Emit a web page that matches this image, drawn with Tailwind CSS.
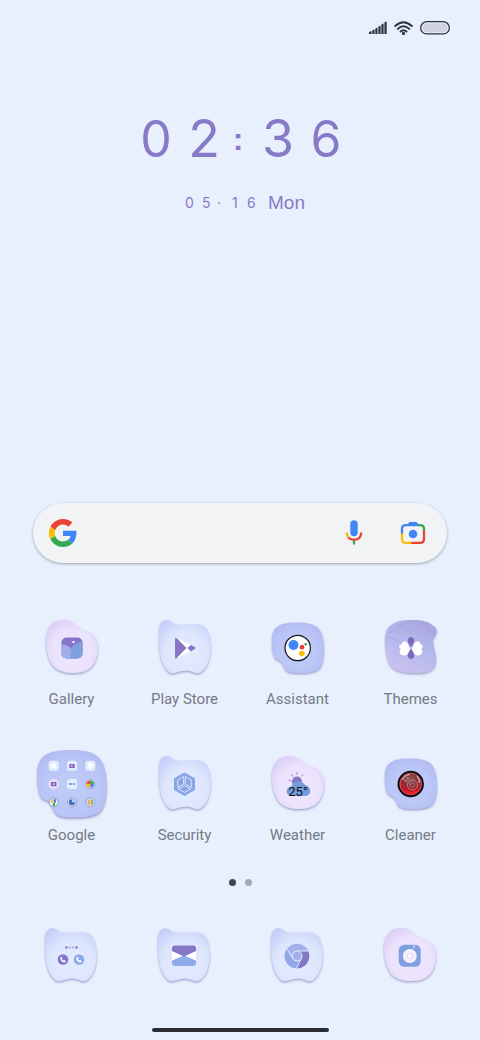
<!DOCTYPE html>
<html lang="en">
<head>
<meta charset="utf-8">
<meta name="viewport" content="width=device-width, initial-scale=1">
<title>Home screen</title>
<script src="https://cdn.jsdelivr.net/npm/@tailwindcss/browser@4"></script>
</head>
<body class="flex min-h-screen flex-col bg-[#e8f0fe] font-[Roboto,sans-serif] text-[#757a84]">

<!-- Shared shapes and fills -->
<svg class="absolute size-0" aria-hidden="true">
  <defs>
    <radialGradient id="pink" cx=".52" cy=".58" r=".66"><stop offset="0" stop-color="#efe8fd"/><stop offset=".6" stop-color="#ebe2fc"/><stop offset="1" stop-color="#d9cdf7"/></radialGradient>
    <radialGradient id="ice" cx=".52" cy=".64" r=".76"><stop offset="0" stop-color="#e3ecfe"/><stop offset=".55" stop-color="#dde6fd"/><stop offset="1" stop-color="#c0cbf8"/></radialGradient>
    <radialGradient id="blue" cx=".5" cy=".55" r=".65"><stop offset="0" stop-color="#bfccf8"/><stop offset=".6" stop-color="#bbc6f7"/><stop offset="1" stop-color="#b0b9f0"/></radialGradient>
    <linearGradient id="violet" x1=".8" y1="0" x2=".3" y2="1"><stop offset="0" stop-color="#a9a3dc"/><stop offset=".5" stop-color="#b4b9ee"/><stop offset="1" stop-color="#cbc2ee"/></linearGradient>
    <radialGradient id="ruby" cx=".5" cy=".3" r=".75"><stop offset="0" stop-color="#86595c"/><stop offset=".45" stop-color="#8e2c33"/><stop offset=".8" stop-color="#d01222"/><stop offset="1" stop-color="#7c0c16"/></radialGradient>
    <filter id="drop" x="-20%" y="-20%" width="140%" height="140%"><feDropShadow dx="0" dy="1.3" stdDeviation=".8" flood-color="#7d83b5" flood-opacity=".75"/></filter>
    <path id="pebble" fill="url(#pink)" filter="url(#drop)" d="M22 2C29 2 33 7 39 11C44 13 49 14 52 18C56 22 56 28 56 32C55 40 53 47 47 51C42 54 37 55 31 55C23 55 17 53 12 49C7 43 4 33 4 24C4 17 5 11 9 7C12 3 17 2 22 2Z"/>
    <path id="cat" fill="url(#ice)" filter="url(#drop)" d="M11 2.300C15 2 17 5.500 21 6.500C28 7 35 6 42 6.300C48 6.500 53 10 54 17C56 24 56 31 55 37C54 44 50 53 44 55C40 56 37 52.500 31 52.500C25 52.500 20 56 16 55C11 53 8 46 6 40C4 31 4 22 4 14C4 8 6 2.500 11 2.300Z"/>
    <g id="bite"><path fill="url(#blue)" filter="url(#drop)" d="M30 4.500C39 4.500 47 6 51 11C55 16 56 25 56 31C56 39 55 47 51 51C46 55 37 55 30 55C24 55 19 54 17 51C15 48 15 45 12 43C10 41 7 42 6 38C4 33 4 27 4 22C4 17 5 12 9 9C14 5 22 4.500 30 4.500Z"/><path d="M30 6L54 24M42 18L47 8" stroke="#a9afe6" stroke-width=".6" opacity=".6" fill="none"/></g>
    <path id="handset" fill="#fff" d="M-1.800-2.700C-3.200-1.700-2.600.5-1 1.900C.5 3.100 2.200 3.200 2.900 2L1.300.5L.3 1C-.5.6-1 0-1.100-.8L-.4-1.500Z"/>
  </defs>
</svg>

<header class="flex h-14 items-center justify-end gap-[7px] pr-[30px]">
  <svg class="h-[14px] w-[18px]" viewBox="0 0 18 14" role="img" aria-label="Signal" fill="#2e3239"><path d="M0 13V11L2.500 10V13ZM3.300 13V9.500L5.500 8.300V13ZM6.300 13V7.800L8.500 6.600V13ZM9.400 13V5.700L11.600 4.500V13ZM12.400 13V3.600L14.600 2.500V13ZM15.400 13V1.500L17.700.3V13Z"/></svg>
  <svg class="h-[14px] w-[19px]" viewBox="0 0 19 14" role="img" aria-label="Wi-Fi" fill="none" stroke="#2e3239" stroke-width="1.900" stroke-linecap="round"><path d="M1.200 5Q9.500-2.600 17.800 5M3.800 7.900Q9.500 2.600 15.200 7.900M6.500 10.500Q9.500 7.800 12.500 10.500"/><circle cx="9.500" cy="12.400" r=".7"/></svg>
  <svg class="h-[14px] w-[30px]" viewBox="0 0 30 14" role="img" aria-label="Battery"><rect x=".7" y=".7" width="28.600" height="12.200" rx="6" fill="#e8f0fe" stroke="#2e3239" stroke-width="1.300"/><rect x="2.300" y="2.300" width="25.400" height="9" rx="4.500" fill="#cfd3df"/></svg>
</header>

<main class="flex flex-1 flex-col">
  <section class="flex h-[447px] flex-col items-center pt-[53px] font-[Inter,sans-serif] text-[#877bc8]" aria-label="Clock">
    <time class="flex h-[60px] items-center pl-[2px] text-[50px] leading-[60px]">
      <span class="w-12 text-center">0</span><span class="w-12 text-center text-[52px]">2</span>
      <span class="mr-[6px] w-5 text-center font-['Liberation_Sans',sans-serif] text-[32px] font-bold">:</span>
      <span class="w-12 text-center text-[52px]">3</span><span class="w-12 text-center">6</span>
    </time>
    <div class="mt-5 flex h-7 items-center pl-[10px] text-[14px] leading-7">
      <span class="w-[17px]">0</span><span class="w-[15px]">5</span><span class="w-[15px]">·</span><span class="w-[15px]">1</span><span class="w-[21px]">6</span><span class="font-['Liberation_Sans',sans-serif] text-[19px]">Mon</span>
    </div>
  </section>

  <form class="mx-[33px] flex h-[60px] items-center rounded-full bg-[#f1f3f5] pr-[20px] pl-[16px] shadow-[0_1px_3px_#9aa2b6]" role="search" onsubmit="return false">
    <svg class="size-7 shrink-0" viewBox="0 0 48 48" role="img" aria-label="Google"><path fill="#ea4335" d="M24 9.500c3.500 0 6.700 1.200 9.200 3.600l6.900-6.900C35.900 2.400 30.500 0 24 0 14.600 0 6.500 5.400 2.600 13.200l8 6.200C12.400 13.700 17.700 9.500 24 9.500z"/><path fill="#4285f4" d="M47 24.500c0-1.600-.2-3.100-.4-4.500H24v9h12.900c-.6 3-2.300 5.500-4.800 7.200l7.700 6C44.400 38 47 31.800 47 24.500z"/><path fill="#fbbc05" d="M10.500 28.600A14.500 14.500 0 0 1 10.500 19.400l-8-6.200A24 24 0 0 0 2.500 34.800z"/><path fill="#34a853" d="M24 48c6.500 0 11.900-2.100 15.900-5.800l-7.700-6c-2.200 1.500-4.900 2.300-8.200 2.300-6.300 0-11.600-4.200-13.500-9.900l-8 6.200C6.500 42.600 14.600 48 24 48z"/></svg>
    <input class="h-full min-w-0 flex-1 bg-transparent px-3 text-base outline-none" type="text" aria-label="Search">
    <button type="button" class="flex size-7 items-center justify-center" aria-label="Voice search">
      <svg class="size-7" viewBox="0 0 28 28" fill="none" stroke-width="2.300"><rect x="10.300" y="1.300" width="7.400" height="16" rx="3.700" fill="#4285f4"/><path stroke="#fbbc05" d="M6.700 13.500Q6.800 17 8.600 18.700"/><path stroke="#ea4335" d="M8.400 18.500Q10.500 20.900 14 20.900Q20.900 20.700 21.300 13.500"/><path stroke="#34a853" d="M14 22V25.500"/></svg>
    </button>
    <button type="button" class="ml-[31px] flex size-7 items-center justify-center" aria-label="Search with camera">
      <svg class="size-7" viewBox="0 0 28 28" fill="none" stroke-width="2.300"><path fill="#4285f4" d="M8.500 5.500L10.500 3H17.500L19.500 5.500V7H8.500Z"/><path stroke="#4285f4" d="M3 15V10Q3 6.200 7 6.200H20"/><path stroke="#34a853" d="M19 6.200H21Q25 6.200 25 10V12"/><path stroke="#ea4335" d="M25 11.500V20Q25 23.800 21 23.800H12"/><path stroke="#fbbc05" d="M3 14.500V20Q3 23.800 7 23.800H12.500"/><circle cx="14" cy="15" r="4.300" fill="#4285f4"/></svg>
    </button>
  </form>

  <nav class="mt-[55px] grid grid-cols-4 gap-y-[45px] pr-[13px] pl-[15px] text-[15px] leading-5" aria-label="Apps">
    <a href="#gallery" class="flex flex-col items-center gap-[11px]">
      <svg class="size-[60px]" viewBox="0 0 60 60" aria-hidden="true"><use href="#pebble"/><clipPath id="gal"><rect x="19.500" y="19.500" width="21" height="21" rx="5"/></clipPath><g clip-path="url(#gal)"><path fill="#8576c8" d="M19 19H41V41H19Z"/><circle cx="20.500" cy="37" r="10.500" fill="#a0aeea"/><circle cx="40" cy="36" r="12" fill="#7f9fe0"/><path fill="#a0aeea" d="M19 28Q28 28 29.500 35L27 41H19Z"/></g><rect x="30.500" y="23" width="2" height="2" rx=".5" fill="#fff"/></svg>
      Gallery</a>
    <a href="#play" class="flex flex-col items-center gap-[11px]">
      <svg class="size-[60px]" viewBox="0 0 60 60" aria-hidden="true"><use href="#cat"/><path fill="#fff" d="M20.500 19.500L38 28V32L20.500 41L31 30Z"/><path fill="#8576c8" d="M20 21Q20 18.800 21.800 20.200L31.500 30L21.800 40Q20 41.500 20 39ZM32.500 30L36 27L40 29.200Q41 30 40 30.800L36 33.500Z"/></svg>
      Play Store</a>
    <a href="#assistant" class="flex flex-col items-center gap-[11px]">
      <svg class="size-[60px]" viewBox="0 0 60 60" aria-hidden="true"><use href="#bite"/><circle cx="29.700" cy="30" r="12.700" fill="#fff" stroke="#14161c" stroke-width="1.200"/><circle cx="25.500" cy="27" r="5" fill="#4285f4"/><circle cx="34" cy="29.200" r="2.400" fill="#ea4335"/><circle cx="33.800" cy="35.500" r="2.800" fill="#fbbc05"/><circle cx="37.700" cy="26.300" r="1.300" fill="#34a853"/></svg>
      Assistant</a>
    <a href="#themes" class="flex flex-col items-center gap-[11px]">
      <svg class="size-[60px]" viewBox="0 0 60 60" aria-hidden="true"><path fill="url(#violet)" filter="url(#drop)" d="M32 2C39 2 47 3 51 7C55 9 57 13 55 16C54 19 52 19 52 23C52 29 55 35 55 41C55 47 54 50 49 53C44 55 38 55 33 55C25 55 17 54 12 50C7 46 6 39 5 33C4 26 4 21 5 15C6 10 9 7 14 5C19 2 26 2 32 2Z"/><path stroke="#9c96d2" stroke-width=".6" opacity=".7" fill="none" d="M5 18L23 25M8 16L25 4M18 7L31 16"/><path fill="#fff" d="M29.500 30C27 30 28 24 24 23.500C21.500 23.200 20.300 25 20.500 26.500C17.500 27 17.500 30 20 30.500C17.500 32.500 18.500 37.500 23 37.500C28 37.500 28 31 29.500 30ZM30.500 30C33 30 32 24 36 23.500C38.500 23.200 39.700 25 39.500 26.500C42.500 27 42.500 30 40 30.500C42.500 32.500 41.500 37.500 37 37.500C32 37.500 32 31 30.500 30Z"/><path fill="#8068bd" d="M30 29Q26.500 24.500 26.800 22Q27.500 19 30 19Q32.500 19 33.200 22Q33.500 24.500 30 29ZM30 31Q26.500 35.500 26.800 38Q27.500 41 30 41Q32.500 41 33.200 38Q33.500 35.500 30 31Z"/></svg>
      Themes</a>

    <a href="#google" class="flex flex-col items-center gap-[11px]">
      <svg class="-m-[10px] size-[80px]" viewBox="0 0 60 60" aria-hidden="true"><use href="#bite"/>
        <g fill="#e3edff"><rect x="12.500" y="12.500" width="7.500" height="7.500" rx="2"/><rect x="26.300" y="12.500" width="7.500" height="7.500" rx="2"/><rect x="40" y="12.500" width="7.500" height="7.500" rx="2"/><rect x="26.300" y="26.300" width="7.500" height="7.500" rx="2"/></g>
        <circle cx="16.200" cy="30" r="4" fill="#eadcf8"/>
        <circle cx="16.300" cy="16.500" r="1.800" fill="#fff"/><circle cx="43.700" cy="16" r="2" fill="#fff"/><rect x="43" y="17" width="1.500" height="2" fill="#fff"/>
        <path fill="#8068bd" d="M28 15H32V18H28ZM14.200 28.500H18.300V31.700H14.200Z"/><path fill="#fff" d="M29.500 15.700L30.800 16.500L29.500 17.200ZM15.700 29.300L17.200 30L15.700 30.800Z"/><path fill="#83a9e9" d="M27.700 29.200H30V30.800H27.700ZM30.500 29.200H32.300V30.800H30.500Z"/>
        <g fill="#cdd5ec" stroke="#8d94b8" stroke-width=".5"><circle cx="43.700" cy="30" r="3.500"/><circle cx="16.300" cy="43.700" r="3.500"/><circle cx="30" cy="43.700" r="3.500"/><circle cx="43.700" cy="43.700" r="3.500"/></g>
        <path fill="#ea4335" d="M43.700 30V27.300A2.700 2.700 0 0 0 41 30Z"/><path fill="#34a853" d="M43.700 30H46.400A2.700 2.700 0 0 0 43.700 27.300Z"/><path fill="#4285f4" d="M43.700 30V32.700A2.700 2.700 0 0 0 46.400 30Z"/><path fill="#fbbc05" d="M43.700 30H41A2.700 2.700 0 0 0 43.700 32.700Z"/>
        <path fill="#fff" d="M14 42H18.500V45.500H14Z"/><path fill="#fbbc05" d="M14.500 41.700H16V44H14.500Z"/><path fill="#4285f4" d="M16.300 41.500H18V44H16.300Z"/><path fill="#34a853" d="M15.700 44H17.200V46.500H15.700Z"/>
        <circle cx="30" cy="43.700" r="2.300" fill="#3b72c8"/><path fill="#bed5fa" d="M30 43.700V41.400A2.300 2.300 0 0 1 32.300 43.700Z"/>
        <path fill="#ea9a70" d="M42 42H43.200V45.500H42Z"/><path fill="#f0cf55" d="M43.200 41.500H44.500V46H43.200Z"/><path fill="#63af86" d="M44.500 42H45.700V45.500H44.500Z"/>
      </svg>
      Google</a>
    <a href="#security" class="flex flex-col items-center gap-[11px]">
      <svg class="size-[60px]" viewBox="0 0 60 60" aria-hidden="true"><use href="#cat"/><path fill="#8aa5e6" stroke="#8aa5e6" stroke-width="2" stroke-linejoin="round" d="M29.500 19.500L39 24.800V35.500L29.500 41L20 35.500V24.800Z"/><path fill="none" stroke="#d9e5fd" stroke-width="1" stroke-linejoin="round" d="M28.700 22.500L22.700 26V33.500L28.700 30ZM30.300 22.500L36.300 26V33.500L30.300 30ZM29.500 31.700L23.300 35L29.500 38.300L35.700 35Z"/></svg>
      Security</a>
    <a href="#weather" class="flex flex-col items-center gap-[11px]">
      <svg class="size-[60px]" viewBox="0 0 60 60" aria-hidden="true"><use href="#pebble"/><path stroke="#9b80d0" stroke-width="1" stroke-linecap="round" d="M29 18.500V20.500M23.500 20.500L24.800 22.200M35 20.500L33.700 22.200M21 26.500L23 27"/><circle cx="29" cy="27.500" r="5" fill="#8576c8"/><path fill="#749cdb" d="M24 42C17 42 17 33 23.500 32.500C25 26 35 26 37 31C44 32 44 42 37 42Z"/><text x="30" y="41.500" text-anchor="middle" font-family="Roboto, sans-serif" font-size="13" fill="#101218">25°</text></svg>
      Weather</a>
    <a href="#cleaner" class="flex flex-col items-center gap-[11px]">
      <svg class="size-[60px]" viewBox="0 0 60 60" aria-hidden="true"><use href="#bite"/><circle cx="29.700" cy="30" r="13.200" fill="#160b0e"/><circle cx="29.700" cy="30" r="10.800" fill="url(#ruby)" stroke="#c9797e" stroke-width=".8"/><path d="M21 35Q30 41 39 35Q36 40.500 30 40.500T21 35Z" fill="#f01d2d"/><g fill="none" stroke="#c99b9e" opacity=".75"><circle cx="31.500" cy="31" r="5" stroke-width="1"/><circle cx="31.500" cy="31" r="2.300" stroke-width=".8"/><path stroke-width="1.500" d="M23.500 26L26 27.500M26 23.500L27.500 25.500"/><path stroke-width="1.200" stroke="#f3d4d6" d="M21.500 26Q24 20.800 29 20.500M36 22Q38.500 24.500 38.500 29"/></g></svg>
      Cleaner</a>
  </nav>

  <div class="mt-[34px] flex justify-center gap-[9px]" aria-label="Page 1 of 2" role="img">
    <span class="size-[7px] rounded-full bg-[#42454c]"></span>
    <span class="size-[7px] rounded-full bg-[#a2a7b1]"></span>
  </div>

  <nav class="mt-[40px] grid grid-cols-4 justify-items-center px-[14px]" aria-label="Dock">
    <a href="#phone" aria-label="Phone">
      <svg class="size-[60px]" viewBox="0 0 60 60" aria-hidden="true"><use href="#cat"/><g fill="#8576c8"><circle cx="25.500" cy="21.500" r="1.300"/><circle cx="35.500" cy="21.500" r="1.300"/><circle cx="22" cy="33.500" r="5.300"/></g><g fill="#8faae8"><circle cx="29" cy="21.500" r="1.100"/><circle cx="32" cy="21.500" r="1.100"/><circle cx="38" cy="33.500" r="5.300"/></g><use href="#handset" x="22" y="33.500"/><use href="#handset" x="38" y="33.500"/></svg>
    </a>
    <a href="#messages" aria-label="Messages">
      <svg class="size-[60px]" viewBox="0 0 60 60" aria-hidden="true"><use href="#cat"/><path fill="#fff" d="M18 24H42V37H18Z"/><path fill="#8576c8" d="M18 25V22.500Q18 19.500 21 19.500H39Q42 19.500 42 22.500V25L30 30.500Z"/><path fill="#8faae8" d="M18 34.500V37Q18 40 21 40H39Q42 40 42 37V34.500L30 29.500Z"/></svg>
    </a>
    <a href="#chrome" aria-label="Chrome">
      <svg class="size-[60px]" viewBox="0 0 60 60" aria-hidden="true"><use href="#cat"/><circle cx="30" cy="30" r="12.300" fill="#a3b0ea"/><path fill="#8576c8" d="M30 25H41.200A12.300 12.300 0 0 1 29.500 42.300L34.500 32.500Z"/><path fill="#8ea8e8" d="M20 22.800A12.300 12.300 0 0 0 29.500 42.300L34.500 32.500L25.500 32.500Z"/><g fill="none" stroke="#e3ebfd" stroke-width="1"><path d="M30 25H41.300M34.400 32.500L29.300 42.500M25.600 32.500L19.700 22.500"/><circle cx="30" cy="30" r="5" fill="#a3b0ea"/></g></svg>
    </a>
    <a href="#camera" aria-label="Camera">
      <svg class="size-[60px]" viewBox="0 0 60 60" aria-hidden="true"><use href="#pebble"/><rect x="18.700" y="18.800" width="22" height="22" rx="5.500" fill="#7f9fe0"/><circle cx="29.800" cy="30" r="7" fill="#f3effd"/><circle cx="29.800" cy="30" r="2.600" fill="#fff" stroke="#ded8f4" stroke-width="1"/><path stroke="#e8effd" stroke-width="1" d="M34 19V22.500"/></svg>
    </a>
  </nav>

  <div class="mx-auto mt-auto mb-2 h-1 w-[177px] rounded-full bg-[#2a2e33]"></div>
</main>
</body>
</html>
